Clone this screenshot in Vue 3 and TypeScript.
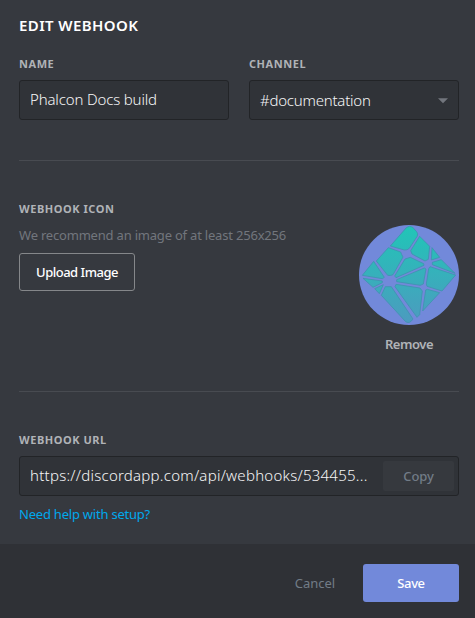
<script setup lang="ts">
import { ref } from 'vue'

const name = ref('Phalcon Docs build')
const channel = '#documentation'
const url = 'https://discordapp.com/api/webhooks/534455...'

const facets: string[] = [
  'M172 38Q182 30 191 37L203 50Q208 56 205 63L181 100Q175 106 166 105L124 93Z',
  'M118 98L155 111Q158 119 162 126L132 179Q124 183 116 181L82 138Z',
  'M212 64L242 94L238 133L228 138L189 117L185 107Z',
  'M249 98L272 127L247 135Z',
  'M277 134L318 175L250 149L250 142Z',
  'M184 127L224 146L225 151L141 188L137 183L168 132Z',
  'M226 159L231 162L223 207L214 211L143 200L143 194Z',
  'M243 155L320 180L279 228L234 214L232 207L239 161Z',
  'M235 223L272 233L221 288L230 225Z',
  'M141 208L213 219L220 228L212 299L204 307L138 215Z',
  'M109 215L127 215L192 312Q182 328 170 320L97 241Z',
  'M74 139L106 187L100 191L40 181Z',
  'M42 190L100 198L100 203L72 217Z',
  'M77 221L103 209L91 236Z',
]
</script>

<template>
  <form class="modal" @submit.prevent>
    <main class="body">
      <h1 class="title">EDIT WEBHOOK</h1>
      <div class="fields">
        <section>
          <h2 class="label">NAME</h2>
          <div class="box"><input v-model="name" class="value v-name" aria-label="Name" /></div>
        </section>
        <section>
          <h2 class="label">CHANNEL</h2>
          <div class="box select">
            <span class="value v-channel">{{ channel }}</span>
            <svg class="arrow" width="10" height="6" viewBox="0 0 10 6"><path d="M0 0.3H10L5 5.3Z" /></svg>
          </div>
        </section>
      </div>
      <hr class="divider" />
      <section class="icon-row">
        <div>
          <h2 class="label">WEBHOOK ICON</h2>
          <p class="hint">We recommend an image of at least 256x256</p>
          <button type="button" class="upload">Upload Image</button>
        </div>
        <div class="avatar">
          <svg width="100" height="100" viewBox="30 30 300 300">
            <defs>
              <linearGradient id="facet" gradientUnits="userSpaceOnUse" x1="180" y1="30" x2="180" y2="330">
                <stop offset="0" stop-color="#20c6b7" />
                <stop offset="1" stop-color="#4d9abf" />
              </linearGradient>
            </defs>
            <circle cx="180" cy="180" r="150" fill="#7289da" />
            <path v-for="d in facets" :key="d" :d="d" fill="url(#facet)" stroke="#3f92ae" stroke-width="2.4" stroke-linejoin="round" />
          </svg>
          <button type="button" class="remove">Remove</button>
        </div>
      </section>
      <hr class="divider" />
      <section>
        <h2 class="label">WEBHOOK URL</h2>
        <div class="box">
          <span class="value v-url">{{ url }}</span>
          <button type="button" class="copy">Copy</button>
        </div>
        <a class="help">Need help with setup?</a>
      </section>
    </main>
    <footer class="footer">
      <button type="button" class="cancel">Cancel</button>
      <button type="submit" class="save">Save</button>
    </footer>
  </form>
</template>

<style>
body {
  background: #36393f;
}
</style>

<style scoped>
* {
  box-sizing: border-box;
}
.modal {
  width: 475px;
  height: 618px;
  display: flex;
  flex-direction: column;
  background: #36393f;
  font-family: "Noto Sans", "Open Sans", sans-serif;
  white-space: nowrap;
}
.body {
  height: 544px;
  padding: 15px 16px 0 19px;
}
h1, h2, p {
  margin: 0;
}
button {
  font-family: inherit;
  border: 0;
  padding: 0;
  background: none;
}
.title {
  font-size: 15px;
  line-height: 20px;
  font-weight: 600;
  letter-spacing: 0.4px;
  color: #fff;
}
.fields {
  display: grid;
  grid-template-columns: 210px 210px;
  gap: 20px;
  margin-top: 21px;
}
.label {
  font-size: 11px;
  line-height: 16px;
  font-weight: 700;
  letter-spacing: 0.55px;
  color: #b0b3b7;
}
.box {
  height: 40px;
  margin-top: 8px;
  padding: 0 4px 0 10px;
  display: flex;
  align-items: center;
  background: #303338;
  border: 1px solid #222427;
  border-radius: 3px;
}
.select {
  padding-right: 10px;
  justify-content: space-between;
}
.value {
  font-family: inherit;
  font-size: 15px;
  line-height: 20px;
  font-weight: 300;
  color: #f6f6f7;
}
input.value {
  width: 100%;
  padding: 0 0 2px;
  border: 0;
  outline: 0;
  background: none;
}
.v-name {
  letter-spacing: -0.15px;
}
.v-channel {
  letter-spacing: -0.22px;
}
.v-url {
  padding-bottom: 2px;
  letter-spacing: 0.25px;
}
.arrow {
  margin-top: 1px;
  fill: #72767d;
}
.divider {
  height: 1px;
  margin: 40px 0;
  border: 0;
  background: #484b51;
}
.icon-row {
  height: 150px;
  display: flex;
  justify-content: space-between;
}
.hint {
  margin-top: 8px;
  font-size: 13px;
  line-height: 20px;
  letter-spacing: -0.2px;
  color: #72767d;
}
.upload {
  width: 116px;
  height: 38px;
  margin-top: 8px;
  border: 1px solid #85878a;
  border-radius: 3px;
  font-size: 13px;
  font-weight: 500;
  letter-spacing: -0.5px;
  color: #fff;
}
.avatar {
  width: 100px;
  padding-top: 24px;
  display: flex;
  flex-direction: column;
  align-items: center;
}
.avatar svg {
  flex: none;
}
.remove {
  margin-top: 9px;
  font-size: 13px;
  line-height: 20px;
  font-weight: 600;
  letter-spacing: -0.45px;
  color: #b0b3b7;
}
.copy {
  width: 71px;
  height: 30px;
  margin-left: auto;
  border-radius: 2px;
  background: #36393e;
  font-size: 13px;
  font-weight: 500;
  letter-spacing: -0.15px;
  color: #727c87;
}
.help {
  display: block;
  margin-top: 8px;
  font-size: 13px;
  line-height: 20px;
  letter-spacing: -0.22px;
  color: #00a8ec;
}
.footer {
  height: 74px;
  padding: 4px 16px 0;
  display: flex;
  align-items: center;
  justify-content: flex-end;
  background: #2f3136;
}
.cancel {
  width: 96px;
  height: 38px;
  font-size: 13px;
  color: #727c87;
}
.save {
  width: 96px;
  height: 38px;
  border-radius: 3px;
  background: #7289da;
  font-size: 13px;
  font-weight: 500;
  letter-spacing: -0.4px;
  color: #fff;
}
</style>
